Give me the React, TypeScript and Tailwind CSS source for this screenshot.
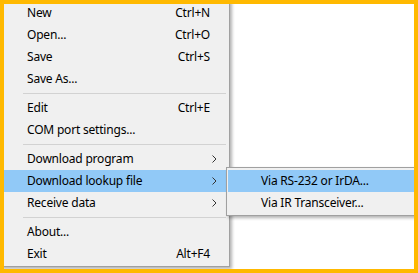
import React from "react";

type Item =
  | { kind: "item"; label: string; shortcut?: string; sub?: boolean; active?: boolean }
  | { kind: "sep" };

const items: Item[] = [
  { kind: "item", label: "New", shortcut: "Ctrl+N" },
  { kind: "item", label: "Open...", shortcut: "Ctrl+O" },
  { kind: "item", label: "Save", shortcut: "Ctrl+S" },
  { kind: "item", label: "Save As..." },
  { kind: "sep" },
  { kind: "item", label: "Edit", shortcut: "Ctrl+E" },
  { kind: "item", label: "COM port settings..." },
  { kind: "sep" },
  { kind: "item", label: "Download program", sub: true },
  { kind: "item", label: "Download lookup file", sub: true, active: true },
  { kind: "item", label: "Receive data", sub: true },
  { kind: "sep" },
  { kind: "item", label: "About..." },
  { kind: "item", label: "Exit", shortcut: "Alt+F4" },
];

function Chevron() {
  return (
    <svg width="5" height="8" viewBox="0 0 5 8" className="block">
      <path d="M0.5 0.5 L4 4 L0.5 7.5" fill="none" stroke="#333" strokeWidth="1" />
    </svg>
  );
}

export default function App() {
  return (
    <div
      className="relative w-[418px] h-[273px] bg-white overflow-hidden text-[12px] text-black"
      style={{ fontFamily: '"Noto Sans", "Open Sans", sans-serif' }}
    >
      {/* main menu */}
      <div className="absolute left-0 top-0 w-[230px] pt-[2px] pb-px bg-[#f0f0f0] border-r border-b border-[#a0a0a0] shadow-[2px_2px_3px_rgba(0,0,0,0.3)]">
        {items.map((it, i) =>
          it.kind === "sep" ? (
            <div key={i} className="h-[7px] flex items-center pl-[23px] pr-[3px]">
              <div className="h-px w-full bg-[#d2d2d2]" />
            </div>
          ) : (
            <div
              key={i}
              className={`h-[22px] flex items-center pl-[27px] pr-[10px] mr-[2px] ${
                it.active ? "bg-[#91c9f7]" : ""
              }`}
            >
              <span className="flex-1 whitespace-nowrap tracking-[-0.2px]">{it.label}</span>
              {it.shortcut && (
                <span className="w-[60px] text-right pr-[7px] whitespace-nowrap tracking-[-0.2px]">
                  {it.shortcut}
                </span>
              )}
              {it.sub && (
                <span className="w-[60px] flex justify-end pr-[0px]">
                  <Chevron />
                </span>
              )}
            </div>
          )
        )}
      </div>

      {/* submenu */}
      <div className="absolute left-[226px] top-[167px] w-[200px] pt-[2px] pb-[1px] pl-px bg-[#f0f0f0] border border-[#a0a0a0] shadow-[2px_2px_3px_rgba(0,0,0,0.3)]">
        <div className="h-[22px] flex items-center pl-[33px] bg-[#91c9f7] whitespace-nowrap tracking-[-0.2px]">
          Via RS-232 or IrDA...
        </div>
        <div className="h-[22px] flex items-center pl-[33px] whitespace-nowrap tracking-[-0.2px]">
          Via IR Transceiver...
        </div>
      </div>

      {/* yellow frame */}
      <div className="absolute inset-0 border-4 border-[#ffb900] pointer-events-none" />
    </div>
  );
}
